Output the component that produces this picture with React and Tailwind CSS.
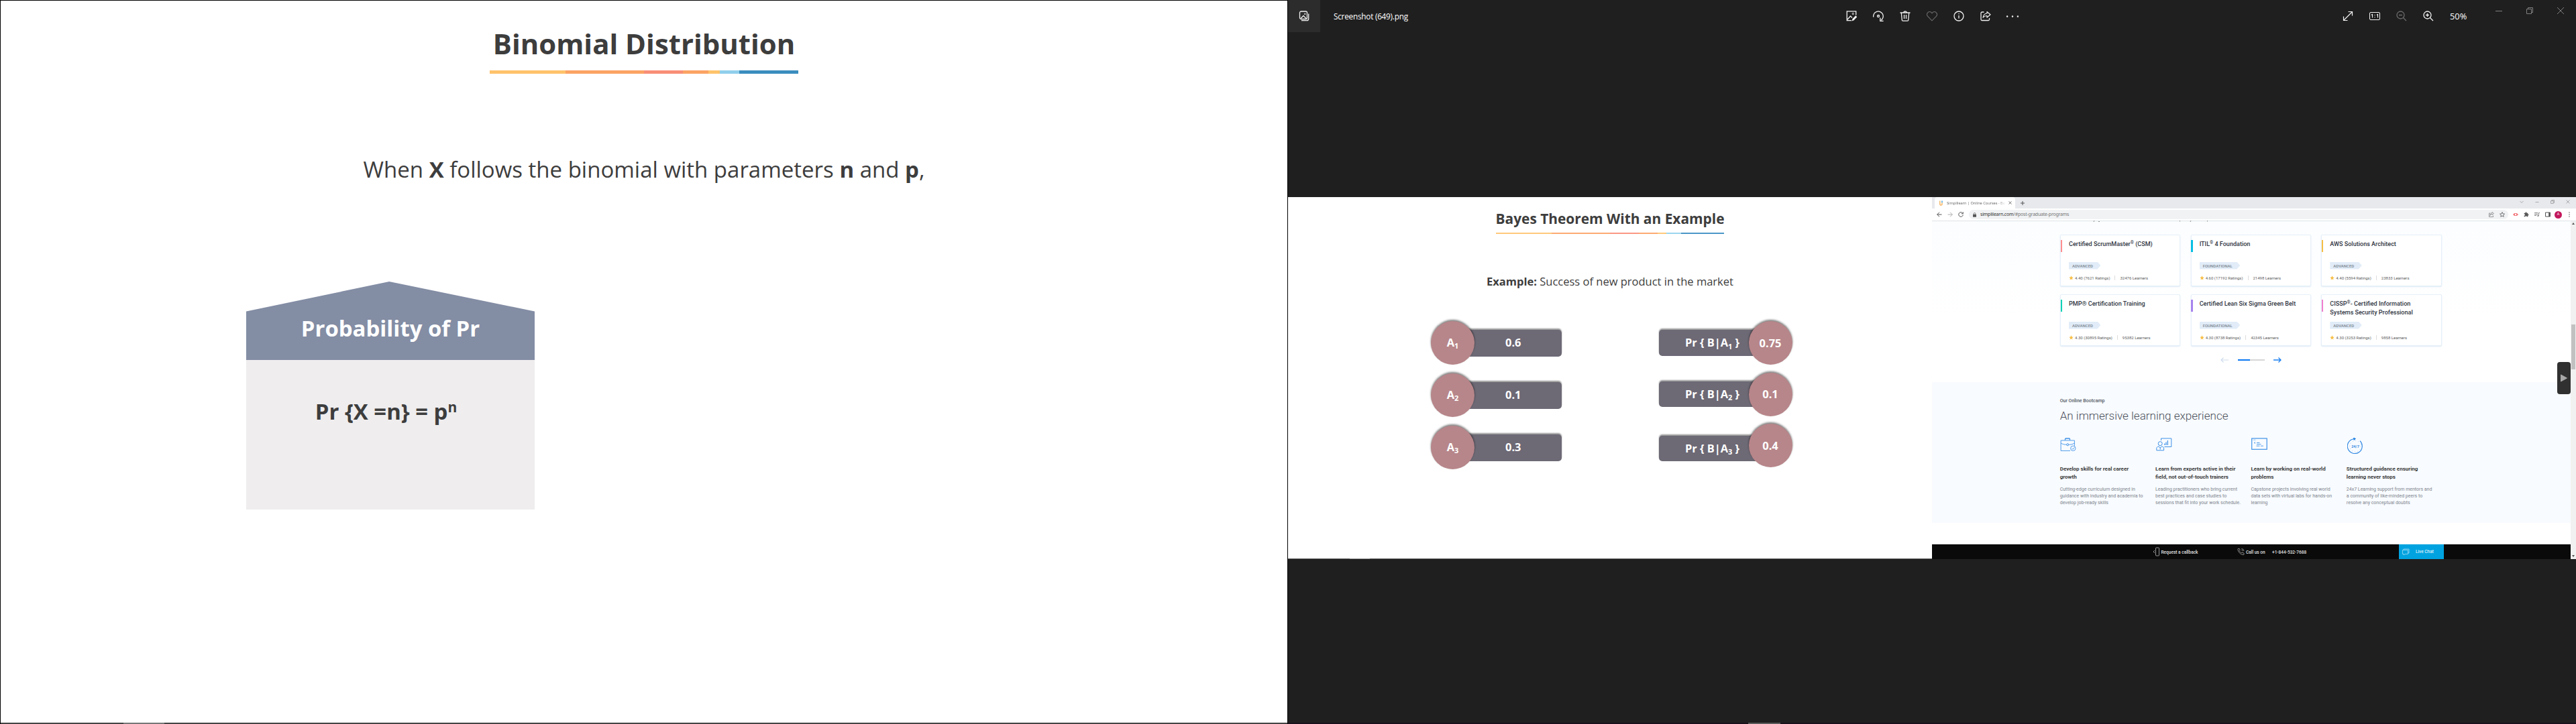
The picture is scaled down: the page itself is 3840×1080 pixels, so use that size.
import React from "react";

const TOP_ROWS = [
  { label: "1", value: "0.6" },
  { label: "2", value: "0.1" },
  { label: "3", value: "0.3" },
];

const CARDS = [
  { title: <>Certified ScrumMaster<Reg /> (CSM)</>, level: "ADVANCED", rating: "4.40 (7621 Ratings)", learners: "32476 Learners", bar: "bg-[#ff8d8f]" },
  { title: <>ITIL<Reg /> 4 Foundation</>, level: "FOUNDATIONAL", rating: "4.60 (17192 Ratings)", learners: "21498 Learners", bar: "bg-[#08bfe3]" },
  { title: <>AWS Solutions Architect</>, level: "ADVANCED", rating: "4.40 (5594 Ratings)", learners: "23833 Learners", bar: "bg-[#f5bd45]" },
  { title: <>PMP® Certification Training</>, level: "ADVANCED", rating: "4.30 (30895 Ratings)", learners: "95382 Learners", bar: "bg-[#0fd3b5]" },
  { title: <>Certified Lean Six Sigma Green Belt</>, level: "FOUNDATIONAL", rating: "4.30 (8738 Ratings)", learners: "42345 Learners", bar: "bg-[#a783ee]" },
  { title: <>CISSP<Reg />- Certified Information<br />Systems Security Professional</>, level: "ADVANCED", rating: "4.30 (3253 Ratings)", learners: "9858 Learners", bar: "bg-[#f07fcd]" },
];

const FEATURES = [
  { icon: <BriefcaseIcon />, title: ["Develop skills for real career", "growth"], body: ["Cutting-edge curriculum designed in", "guidance with industry and academia to", "develop job-ready skills"] },
  { icon: <TrainerIcon />, title: ["Learn from experts active in their", "field, not out-of-touch trainers"], body: ["Leading practitioners who bring current", "best practices and case studies to", "sessions that fit into your work schedule."] },
  { icon: <CodeWindowIcon />, title: ["Learn by working on real-world", "problems"], body: ["Capstone projects involving real world", "data sets with virtual labs for hands-on", "learning"] },
  { icon: <ClockIcon />, title: ["Structured guidance ensuring", "learning never stops"], body: ["24x7 Learning support from mentors and", "a community of like-minded peers to", "resolve any conceptual doubts"] },
];

function Reg() {
  return <span className="relative -top-[3px] text-[6.500px] leading-none font-normal">®</span>;
}

function BriefcaseIcon() {
  return (
    <svg width="24" height="20" viewBox="0 0 23 20" fill="none" stroke="#3f92e6">
      <path d="M7 3.5V2.2A1.2 1.2 0 0 1 8.200 1h4.600A1.200 1.200 0 0 1 14 2.200V3.500" strokeWidth="1.400" />
      <path d="M14.500 19.400H.600V4h20.300v8" strokeWidth=".900" />
      <path d="M.600 8c3 2 6 2.300 8.700 2.300M20.900 8c-3 2-6 2.300-8.700 2.300" strokeWidth=".900" />
      <circle cx="10.700" cy="10.300" r="1.500" />
      <circle cx="18.800" cy="15.800" r="3.700" strokeWidth=".900" />
      <path d="m17 15.900 1.400 1.400 2.500-2.900" strokeWidth=".900" />
    </svg>
  );
}
function TrainerIcon() {
  return (
    <svg width="24" height="20" viewBox="0 0 24 20" fill="none" stroke="#3f92e6" className="ml-[1px]">
      <path d="M7.500 4V1h15.300v12.500H12.500" />
      <path d="M12.800 8.500V11M15 6.500V11M17.300 4V11" strokeWidth="1.200" />
      <circle cx="6.200" cy="8.700" r="3" />
      <path d="M.800 18.800v-3c0-1.700 1.200-2.500 3.200-2.800l2.200 2 2.200-2c2 .300 3.200 1.100 3.200 2.800v3zM6.200 14.500v3" />
    </svg>
  );
}
function CodeWindowIcon() {
  return (
    <svg width="24" height="20" viewBox="0 0 24 20" fill="none" stroke="#3f92e6" className="ml-[1px]">
      <rect x=".7" y="1" width="22.500" height="16.300" strokeWidth="1.200" />
      <path d="M2.500 3.300h4" strokeWidth=".700" strokeDasharray="1 .5" />
      <path d="m6 6.500-1.700 1L6 8.500M8 7.400h4.500M8 9.700h6.500M7.500 12.200h5M14 12.200h4" strokeWidth=".900" />
    </svg>
  );
}
function ClockIcon() {
  return (
    <svg width="24" height="24" viewBox="0 0 24 24" fill="none" stroke="#2e87e2" className="ml-[1px]">
      <path d="M19 4.700A11 11 0 1 1 9.500 1.700" strokeWidth="1.100" />
      <path d="m9.500 0 3 1.500-2.500 2z" fill="#2e87e2" />
      <circle cx="12" cy="12.700" r="8.300" strokeWidth=".900" strokeDasharray=".8 3.540" opacity=".6" />
      <text x="12" y="14.700" fontSize="5.600" fontFamily="Roboto, sans-serif" fontWeight="700" textAnchor="middle" fill="#2e87e2" stroke="none">24/7</text>
    </svg>
  );
}

function Icon({ children, className = "text-[#f2f2f2]", size = 16 }) {
  return (
    <svg width={size} height={size} viewBox="0 0 16 16" fill="none" stroke="currentColor" className={"shrink-0 " + className}>
      {children}
    </svg>
  );
}

function Slide1() {
  return (
    <section className="flex h-[1080px] w-[1920px] shrink-0 flex-col border-x border-t border-black bg-white text-[#3d3d3d]">
      <h1 className="mt-[34px] h-[60px] text-center text-[41.9px] leading-[60px] font-bold">Binomial Distribution</h1>
      <div className="mx-auto mt-[10px] flex h-[5px] w-[460px]">
        <i className="w-[113px] bg-[#ffc36b]" />
        <i className="w-[117px] bg-[#fba364]" />
        <i className="w-[58px] bg-[#f98e77]" />
        <i className="w-[38px] bg-[#fba364]" />
        <i className="w-[17px] bg-[#ffc36b]" />
        <i className="w-[29px] bg-[#90cfec]" />
        <i className="grow bg-[#3b8dbe]" />
      </div>
      <p className="mt-[113px] h-[60px] text-center text-[33px] leading-[60px]">
        When <b>X</b> follows the binomial with parameters <b>n</b> and <b>p</b>,
      </p>
      <article className="mt-[137px] ml-[366px] w-[430px] text-center text-[32.900px] font-bold">
        <header className="h-[117px] bg-[#838da4] pt-[50px] leading-[40px] text-white [clip-path:polygon(0_38%,49.6%_0,100%_38%,100%_100%,0_100%)]">
          Probability of Pr
        </header>
        <div className="h-[223px] bg-[#efedee] pt-[47px] pr-[13px] leading-[60px]">
          Pr {"{X =n} = p"}
          <span className="relative -top-[11px] text-[21px]">n</span>
        </div>
      </article>
      <footer className="mt-auto flex h-[2px] bg-[#444]">
        <i className="ml-[183px] w-[61px] bg-[#777]" />
      </footer>
    </section>
  );
}

function PhotosBar() {
  return (
    <header className="flex h-[48px] w-full shrink-0 items-start">
      <div className="flex h-[48px] w-[48px] items-center justify-center bg-[#2c2c2c]">
        <Icon>
          <rect x="1.500" y="1" width="11" height="11.500" rx="2" strokeWidth="1.300" />
          <path d="M4 14.700h8a2.700 2.700 0 0 0 2.700-2.700V4.500M3 11.500l4-4 4 4" strokeWidth="1.300" />
          <circle cx="9.300" cy="4.800" r=".8" />
        </Icon>
      </div>
      <span className="ml-[20px] w-[764px] text-[11.8px] leading-[48px] tracking-[-0.250px] text-white">Screenshot (649).png</span>
      <div className="flex h-[48px] items-center gap-6">
        <Icon>
          <path d="M8 14.700H1.200V.900h13.500v5.600" strokeWidth="1.300" />
          <path d="M1.500 13.500 6.500 8 9 10.500" strokeWidth="1.300" />
          <circle cx="10.300" cy="4.500" r="1.100" />
          <path d="m8.500 15.500 1-3.500 4.700-4.700 2 2-4.700 4.900z" fill="currentColor" stroke="none" />
        </Icon>
        <Icon className="overflow-visible text-[#f2f2f2]">
          <path d="M.700 9.500A7.300 7.300 0 1 1 12 14.300" strokeWidth="1.300" />
          <path d="M10.800 10.500v4.800h4.800" strokeWidth="1.300" />
          <circle cx="8" cy="8" r="1.500" strokeWidth="1.300" />
        </Icon>
        <Icon>
          <path d="M.500 3h15M5.800 3a2.200 2.200 0 0 1 4.400 0M2.300 3l1 11a1.300 1.300 0 0 0 1.300 1.200h6.800a1.300 1.300 0 0 0 1.300-1.200l1-11M6.500 6v6M9.500 6v6" strokeWidth="1.300" />
        </Icon>
        <Icon className="text-[#6b6b6b]">
          <path d="M8 14.800 1.700 8.300a4 4 0 0 1 0-5.500 3.900 3.900 0 0 1 5.500 0L8 3.600l.800-.800a3.900 3.900 0 0 1 5.500 0 4 4 0 0 1 0 5.500z" strokeWidth="1.100" />
        </Icon>
        <Icon>
          <circle cx="8" cy="8" r="7" strokeWidth="1.300" />
          <path d="M8 7v4.500M8 4v1.300" strokeWidth="1.300" />
        </Icon>
        <Icon>
          <path d="M5.500 2H2.500A1.500 1.500 0 0 0 1 3.500v9.500a1.500 1.500 0 0 0 1.500 1.500h9.500a1.500 1.500 0 0 0 1.500-1.500v-2" strokeWidth="1.300" />
          <path d="M10 1.500 15 5.700 10 10V7.500c-2.500 0-4.500.800-6 2.700C4.500 6.500 6.500 4.300 10 4z" strokeWidth="1.200" strokeLinejoin="round" />
        </Icon>
        <Icon size={20} className="-ml-[2px] text-[#f2f2f2]">
          <path d="M1.700 8.400h.01M8 8.400h.01M14.300 8.400h.01" strokeWidth="2" strokeLinecap="round" />
        </Icon>
      </div>
      <div className="ml-auto flex h-[48px] items-center gap-6">
        <Icon>
          <path d="M1.500 8.500v6h6M8.500 1.500h6v6M1.500 14.500l13-13" strokeWidth="1.200" />
        </Icon>
        <svg width="16" height="16" viewBox="0 0 16 16" fill="none" stroke="#f2f2f2" className="overflow-visible">
          <rect x=".5" y="2.500" width="15" height="11" rx="1.500" />
          <path d="M3 6.300 4.500 5.400v5M11 6.300l1.500-.9v5M8 6v1M8 9.200v1" strokeWidth="1.100" />
        </svg>
        <Icon className="text-[#6b6b6b]">
          <circle cx="6.500" cy="6.500" r="5.500" strokeWidth="1.300" />
          <path d="m10.500 10.500 4.500 4.500M4 6.500h5" strokeWidth="1.300" />
        </Icon>
        <Icon>
          <circle cx="6.500" cy="6.500" r="5.500" strokeWidth="1.300" />
          <path d="m10.500 10.500 4.500 4.500M4 6.500h5M6.500 4v5" strokeWidth="1.300" />
        </Icon>
        <span className="w-[68px] text-[12.800px] leading-[20px] text-white">50%</span>
      </div>
      <div className="mr-[18px] flex h-[32px] items-center gap-9 text-[#808080]">
        <svg width="10" height="10" fill="none" stroke="currentColor"><path d="M0 5.500h10" /></svg>
        <svg width="10" height="10" fill="none" stroke="currentColor"><path d="M.5 2.500h7v7h-7zM2.500 2.500v-2h7v7h-2" /></svg>
        <svg width="10" height="10" fill="none" stroke="currentColor"><path d="m0 0 10 10M10 0 0 10" /></svg>
      </div>
    </header>
  );
}

function Disc({ children }) {
  return (
    <div className="z-10 flex h-[65px] w-[65px] shrink-0 items-center justify-center rounded-full bg-[#b7868a] shadow-[0_-2px_3px_rgba(0,0,0,0.5)]">
      <span className="leading-[20px]">{children}</span>
    </div>
  );
}

function Sub({ children }) {
  return <span className="relative top-[3.500px] text-[11px]">{children}</span>;
}

function Slide2() {
  return (
    <section className="flex h-[540px] w-[960px] shrink-0 flex-col bg-white text-[#3d3d3d]">
      <h2 className="mt-[17px] h-[30px] text-center text-[20.9px] leading-[30px] font-bold">Bayes Theorem With an Example</h2>
      <div className="mx-auto mt-[6px] flex h-[2px] w-[340px]">
        <i className="w-[83px] bg-[#ffc97a]" />
        <i className="w-[87px] bg-[#fdaa72]" />
        <i className="w-[43px] bg-[#fa9884]" />
        <i className="w-[28px] bg-[#fdaa72]" />
        <i className="w-[13px] bg-[#ffc97a]" />
        <i className="w-[22px] bg-[#9bd5ef]" />
        <i className="grow bg-[#4a97c6]" />
      </div>
      <p className="mt-[56px] h-[30px] text-center text-[16.5px] leading-[30px]">
        <b>Example:</b> Success of new product in the market
      </p>
      <div className="mt-[44px] flex pl-[213px] text-[16.4px] font-bold text-white">
        <div className="flex w-[339.5px] flex-col gap-[13px]">
          {TOP_ROWS.map((r) => (
            <div key={r.label} className="flex items-center">
              <Disc>A<Sub>{r.label}</Sub></Disc>
              <div className="-ml-[32px] flex h-[40px] w-[161.500px] items-center justify-center rounded-[5px] bg-[#6d6975] pl-[18px] shadow-[0_-2px_2px_rgba(0,0,0,0.4)]">{r.value}</div>
            </div>
          ))}
        </div>
        <div className="flex flex-col gap-[11.500px]">
          <RightRow n="1" value="0.75" />
          <RightRow n="2" value="0.1" />
          <RightRow n="3" value="0.4" low />
        </div>
      </div>
      <footer className="mt-auto flex h-px bg-[#666]">
        <i className="ml-[92px] w-[30px] bg-[#999]" />
      </footer>
    </section>
  );
}

function RightRow({ n, value, low }) {
  return (
    <div className="flex items-center">
      <div className={(low ? "mt-[9px] " : "") + "flex h-[38.500px] w-[167px] items-center justify-center rounded-[5px] bg-[#6d6975] pr-[7px] shadow-[0_-2px_2px_rgba(0,0,0,0.4)]"}>
        <span>Pr {"{ B|A"}<Sub>{n}</Sub>{" }"}</span>
      </div>
      <div className="-ml-[33px]"><Disc>{value}</Disc></div>
    </div>
  );
}

function ChromeTop() {
  return (
    <div className="shrink-0 font-['Noto_Sans',sans-serif]">
      <div className="flex h-[17px] items-end bg-[#e7e9ed]">
        <div className="ml-[4px] flex h-[17px] w-[120px] items-center rounded-t-[4px] bg-white pl-[7px]">
          <svg width="5" height="8" viewBox="0 0 5 8" fill="none" strokeWidth="1.400"><path d="M.8.500v5.500l1.500 1.500" stroke="#f6b15b" /><path d="M4 .5v3" stroke="#3c9fd8" /><path d="M4 3.500V6L2.500 7.500" stroke="#f6b15b" /></svg>
          <span className="ml-[6px] w-[88px] overflow-hidden bg-gradient-to-r from-[#666] from-85% to-white bg-clip-text text-[5.700px] leading-[10px] tracking-[-0.050px] whitespace-nowrap text-transparent">Simplilearn | Online Courses - Bo</span>
          <svg width="5" height="5" viewBox="0 0 5 5" stroke="#444" strokeWidth=".8" className="ml-[4px]"><path d="m.5.500 4 4M4.500.500l-4 4" /></svg>
        </div>
        <svg width="6" height="6" viewBox="0 0 6 6" stroke="#555" className="mb-[5.500px] ml-[8px]"><path d="M0 3h6M3 0v6" /></svg>
        <div className="mr-[9px] mb-[7px] ml-auto flex gap-[17px] text-[#999]">
          <svg width="6" height="6" viewBox="0 0 6 6" fill="none" stroke="currentColor" strokeWidth=".8"><path d="m.5 2 2.500 2.500L5.500 2" /></svg>
          <svg width="6" height="6" viewBox="0 0 6 6" fill="none" stroke="currentColor" strokeWidth=".8"><path d="M.5 3.500h5" /></svg>
          <svg width="6" height="6" viewBox="0 0 6 6" fill="none" stroke="currentColor" strokeWidth=".8"><path d="M.5 1.700h3.700v3.800H.5zM1.700 1.500V.5h3.800v4H4.500" /></svg>
          <svg width="6" height="6" viewBox="0 0 6 6" fill="none" stroke="currentColor" strokeWidth=".8"><path d="m.5.500 5 5M5.500.500l-5 5" /></svg>
        </div>
      </div>
      <div className="flex h-[19px] items-center border-b border-[#dfe3e6] bg-white pl-[7px]">
        <svg width="8" height="8" viewBox="0 0 8 8" fill="none" stroke="#555"><path d="M7.500 4h-7M4 .7.700 4 4 7.300" /></svg>
        <svg width="8" height="8" viewBox="0 0 8 8" fill="none" stroke="#b0b0b0" className="ml-2"><path d="M.500 4h7M4 .7 7.300 4 4 7.300" /></svg>
        <svg width="8" height="8" viewBox="0 0 8 8" fill="none" stroke="#555" className="ml-2"><path d="M6.700 2A3.300 3.300 0 1 0 7.300 4.500M7.300.3v2.500H4.800" /></svg>
        <div className="ml-[8px] flex h-[14px] w-[804px] items-center rounded-full bg-[#f0f2f4] pl-[6px]">
          <svg width="5" height="7" viewBox="0 0 5 7" fill="#555"><rect y="2.700" width="5" height="4" rx=".5" /><path d="M1.200 3V1.800a1.300 1.300 0 0 1 2.600 0V3" fill="none" stroke="#555" strokeWidth=".7" /></svg>
          <span className="ml-[6px] text-[7px] leading-[10px] tracking-[-0.220px] text-[#777]"><span className="text-[#333]">simplilearn.com</span>/#post-graduate-programs</span>
          <svg width="8" height="8" viewBox="0 0 16 16" fill="none" stroke="#777" strokeWidth="1.500" className="ml-auto"><path d="M5 4H1v11h12v-4M10 1l5 4-5 4V7C7 7 5 8 4 11c0-4 2-7 6-8z" /></svg>
          <svg width="8" height="8" viewBox="0 0 16 16" fill="none" stroke="#555" strokeWidth="1.600" className="mr-[5px] ml-[8px]"><path d="m8 1 2.100 4.700 5 .5-3.800 3.400 1.100 5L8 12l-4.400 2.600 1.100-5L1 6.200l5-.5z" /></svg>
        </div>
        <div className="ml-[7px] flex items-center gap-2">
          <svg width="8" height="8" viewBox="0 0 8 8" fill="none" stroke="#f05a60"><path d="M2.500 2.500h3v3h-3zM0 4h2.500M5.500 4 8 4M2.500 2l-1.500 2 1.500 2M5.500 2 7 4 5.500 6" strokeWidth=".8" /></svg>
          <svg width="8" height="8" viewBox="0 0 24 24" fill="#555"><path d="M20.500 11H19V7a2 2 0 0 0-2-2h-4V3.500a2.500 2.500 0 0 0-5 0V5H4a2 2 0 0 0-2 2v3.800h1.500a2.700 2.700 0 0 1 0 5.400H2V20a2 2 0 0 0 2 2h3.800v-1.500a2.700 2.700 0 0 1 5.400 0V22H17a2 2 0 0 0 2-2v-4h1.500a2.500 2.500 0 0 0 0-5z" /></svg>
          <svg width="8" height="8" viewBox="0 0 16 16" fill="none" stroke="#666" strokeWidth="1.600"><path d="M0 3h10M0 7h10M0 11h6M12.500 12V3H16" /><circle cx="10.700" cy="12" r="1.800" fill="#666" stroke="none" /></svg>
          <svg width="8" height="8" viewBox="0 0 16 16" fill="none" stroke="#555" strokeWidth="2"><path d="M1 2h14v12H1zM12.500 2v12" /><path d="M10.500 2h4v12h-4z" fill="#555" stroke="none" /></svg>
        </div>
        <span className="ml-[6px] flex h-[11px] w-[11px] items-center justify-center rounded-full bg-[#c2185b] text-[5.500px] leading-none text-white">A</span>
        <svg width="8" height="8" viewBox="0 0 8 8" fill="#666" className="ml-[7px]"><circle cx="4" cy="1" r=".8" /><circle cx="4" cy="4" r=".8" /><circle cx="4" cy="7" r=".8" /></svg>
      </div>
    </div>
  );
}

function Card({ card }) {
  return (
    <article className="flex h-[77px] rounded-[2px] border border-[#e6f0f9] bg-white shadow-[0_1px_2px_#dce9f6]">
      <div className={"mt-[7px] -ml-[0.500px] h-[17.500px] w-[2.500px] " + card.bar} />
      <div className="ml-[10px] flex flex-col">
        <h3 className="mt-[7px] h-[32.500px] text-[9.050px] leading-[13px] font-medium whitespace-nowrap text-[#30353f]">{card.title}</h3>
        <span className="h-[11px] self-start bg-[#e1ecf8] pr-[11.500px] pl-[5px] text-[6px] leading-[11px] font-medium text-[#7b858f] [clip-path:polygon(0_0,calc(100%-5px)_0,100%_50%,calc(100%-5px)_100%,0_100%)]">{card.level}</span>
        <div className="mt-[8px] flex items-center text-[6px] leading-[10px] whitespace-nowrap text-[#606060]">
          <svg width="7" height="7" viewBox="0 0 24 24" fill="#f7bd44"><path d="m12 1 3.200 7.300 7.800.8-5.900 5.300 1.700 7.800L12 18.200l-6.800 4 1.700-7.800L1 9.100l7.800-.8z" /></svg>
          <span className="ml-[2px]">{card.rating}</span>
          <i className="mx-[7px] h-[7px] w-px bg-[#ddd]" />
          <span>{card.learners}</span>
        </div>
      </div>
    </article>
  );
}

function Browser() {
  return (
    <section className="flex h-[540px] w-[960px] shrink-0 flex-col bg-white font-[Roboto,sans-serif]">
      <ChromeTop />
      <div className="flex grow">
        <div className="flex w-[952px] flex-col">
          <div className="flex h-[239.500px] flex-col bg-gradient-to-b from-[#fbfdff] to-white to-60% pl-[191px]">
            <svg width="240" height="3" viewBox="0 0 240 3" stroke="#777" strokeWidth=".8" className="-mt-px"><path d="M50 2l1-2M57 1.500h2M178.500 0v1.500M194 2l1-2M219.500 0v1.500" /></svg>
            <div className="mt-[18px] grid w-[568.500px] grid-cols-3 gap-x-[15.500px] gap-y-[12px]">
              {CARDS.map((c, i) => <Card key={i} card={c} />)}
            </div>
            <div className="mt-[17px] ml-[239px] flex items-center">
              <svg width="12" height="8" viewBox="0 0 12 8" fill="none" stroke="#cfdded" strokeWidth="1.200"><path d="M12 4H1M4.500.5 1 4l3.500 3.500" /></svg>
              <div className="ml-[14px] flex h-[2px] w-[40px] bg-[#d6d6d6]"><i className="w-[18px] bg-[#0b78f2]" /></div>
              <svg width="12" height="8" viewBox="0 0 12 8" fill="none" stroke="#1a7ff0" strokeWidth="1.300" className="ml-[13px]"><path d="M0 4h11M7.500.5 11 4 7.500 7.500" /></svg>
            </div>
          </div>
          <div className="flex h-[210.500px] flex-col bg-[#f8fbff] pl-[190.700px]">
            <p className="mt-[23px] text-[7px] leading-[10px] font-medium text-[#515762]">Our Online Bootcamp</p>
            <h2 className="mt-[6px] text-[17.060px] leading-[22px] font-light text-[#4b505a]">An immersive learning experience</h2>
            <div className="mt-[22px] flex">
              {FEATURES.map((f) => (
                <div key={f.title[0]} className="w-[142.400px] whitespace-nowrap">
                  <div className="h-[41px]">{f.icon}</div>
                  <h3 className="text-[8px] leading-[12px] font-bold text-[#3a3a3a]">{f.title.map((t) => <span key={t} className="block">{t}</span>)}</h3>
                  <p className="mt-[7px] text-[7px] leading-[10px] text-[#7d848c]">{f.body.map((t) => <span key={t} className="block">{t}</span>)}</p>
                </div>
              ))}
            </div>
          </div>
          <footer className="mt-[32px] flex h-[22px] items-center bg-[#0a0a0a] text-[6.540px] leading-[10px] text-[#e0e0e0]">
            <svg width="11" height="14" viewBox="0 0 11 14" fill="none" stroke="#bbb" className="ml-[329px]"><rect x="4.500" y="1" width="5" height="12" rx="1" strokeWidth=".8" /><path d="M3 5 1 7l2 2" strokeWidth=".8" /></svg>
            <span className="ml-[1.500px] w-[113.500px] pt-[2px] font-medium">Request a callback</span>
            <svg width="11" height="12" viewBox="0 0 24 24" fill="none" stroke="#bbb" strokeWidth="1.600"><path d="M22 17v3a2 2 0 0 1-2 2C10 21 3 13 2 4a2 2 0 0 1 2-2h3l2 5-2 2c1 3 4 6 6 7l2-2zM14 2a9 9 0 0 1 8 8M14 6a5 5 0 0 1 4 4" /></svg>
            <span className="ml-[2px] w-[39px] pt-[2px] font-medium">Call us on</span>
            <span className="pt-[2px] font-medium">+1-844-532-7688</span>
            <div className="mr-[189px] ml-auto flex h-[22px] w-[67px] items-center bg-[#00a3e0] pl-[5px] text-white">
              <svg width="11" height="11" viewBox="0 0 11 11" fill="none" stroke="#a5dcf5" strokeWidth=".8"><path d="M.5 2.500h8v6H4L2.500 10V8.500h-2zM2 2.500V1h8v6H8.500" /></svg>
              <span className="ml-[9px]">Live Chat</span>
            </div>
          </footer>
        </div>
        <div className="flex w-[8px] flex-col items-center bg-[#f1f1f1]">
          <svg width="4" height="3" viewBox="0 0 4 3" fill="#555" className="mt-[2px]"><path d="M0 3 2 0l2 3z" /></svg>
          <div className="mt-[149px] h-[67px] w-[6px] bg-[#c1c1c1]" />
          <svg width="4" height="3" viewBox="0 0 4 3" fill="#555" className="mt-auto mb-[3px]"><path d="M0 0l2 3 2-3z" /></svg>
        </div>
      </div>
    </section>
  );
}

function Photos() {
  return (
    <section className="relative flex h-[1080px] w-[1920px] shrink-0 flex-col bg-[#1f1f1f]">
      <PhotosBar />
      <div className="mt-[246px] flex">
        <Slide2 />
        <Browser />
      </div>
      <footer className="mt-auto flex h-[2px] bg-[#18121a]">
        <i className="ml-[686px] w-[48px] bg-[#5a5a5a]" />
      </footer>
      <button className="absolute top-[540px] right-[8px] flex h-[48px] w-[20px] items-center justify-center rounded-[4px] bg-[#303030]">
        <svg width="10" height="12" viewBox="0 0 10 12" fill="#a8a8a8" stroke="#a8a8a8" strokeLinejoin="round"><path d="M.500 1v10L9.500 6z" /></svg>
      </button>
    </section>
  );
}

export default function App() {
  return (
    <main className="flex h-[1080px] w-[3840px] overflow-hidden bg-black font-['Open_Sans',sans-serif]">
      <Slide1 />
      <Photos />
    </main>
  );
}
